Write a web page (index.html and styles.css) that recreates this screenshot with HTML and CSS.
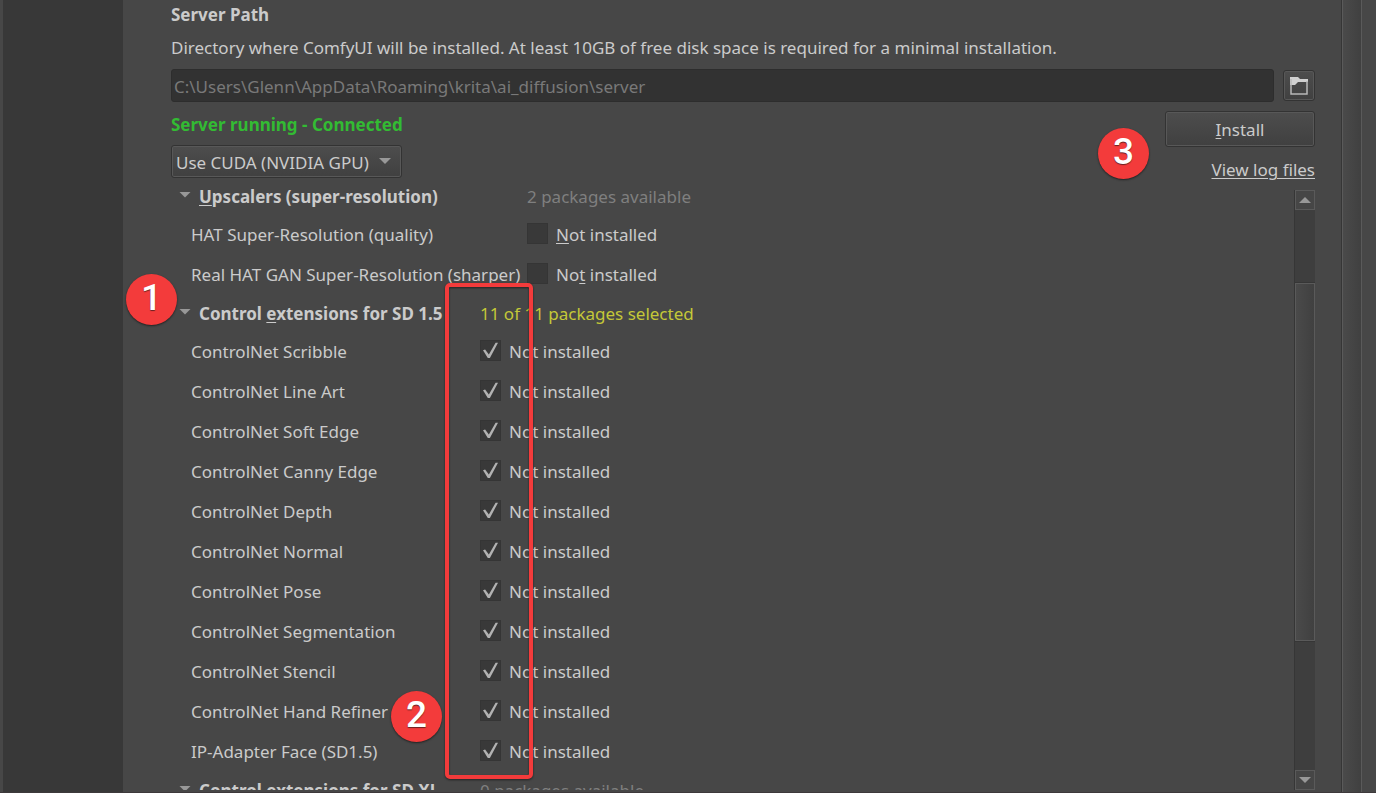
FILE: index.html
```html
<!DOCTYPE html>
<html lang="en">
<head>
<meta charset="utf-8">
<title>Server configuration</title>
<link rel="stylesheet" href="styles.css">
</head>
<body>
<div class="window">
  <aside class="sidebar"></aside>
  <main class="panel">
    <h2 class="title">Server Path</h2>
    <label class="description" for="path">Directory where ComfyUI will be installed. At least 10GB of free disk space is required for a minimal installation.</label>
    <div class="path-row">
      <input class="path" id="path" type="text" value="C:\Users\Glenn\AppData\Roaming\krita\ai_diffusion\server" disabled>
      <button class="button browse" type="button" aria-label="Choose folder">
        <svg width="20" height="20" viewBox="0 0 20 20"><path d="M1 1H9L11 3H19V6H9L6 9H1Z" fill="#d0d0d0"/><path d="M2 3V18H18V5" fill="none" stroke="#b8b8b8" stroke-width="1.5"/></svg>
      </button>
    </div>
    <div class="body">
      <div class="left">
        <p class="status">Server running - Connected</p>
        <div class="combo">
          <select class="select" aria-label="Backend"><option>Use CUDA (NVIDIA GPU)</option></select>
          <i class="arrow combo-arrow"></i>
        </div>
        <div class="packages">
          <section class="group wide">
            <h3 class="head"><i class="arrow"></i><span class="name"><u>U</u>pscalers (super-resolution)</span><span class="count">2 packages available</span></h3>
            <div class="row"><span class="name">HAT Super-Resolution (quality)</span><label class="check"><input type="checkbox"><span><u>N</u>ot installed</span></label></div>
            <div class="row"><span class="name">Real HAT GAN Super-Resolution (sharper)</span><label class="check"><input type="checkbox"><span>No<u>t</u> installed</span></label></div>
          </section>
          <section class="group">
            <h3 class="head"><i class="arrow"></i><span class="name">Control <u>e</u>xtensions for SD 1.5</span><span class="count selected">11 of 11 packages selected</span></h3>
            <div class="row"><span class="name">ControlNet Scribble</span><label class="check"><input type="checkbox" checked><span>Not installed</span></label></div>
            <div class="row"><span class="name">ControlNet Line Art</span><label class="check"><input type="checkbox" checked><span>Not installed</span></label></div>
            <div class="row"><span class="name">ControlNet Soft Edge</span><label class="check"><input type="checkbox" checked><span>Not installed</span></label></div>
            <div class="row"><span class="name">ControlNet Canny Edge</span><label class="check"><input type="checkbox" checked><span>Not installed</span></label></div>
            <div class="row"><span class="name">ControlNet Depth</span><label class="check"><input type="checkbox" checked><span>Not installed</span></label></div>
            <div class="row"><span class="name">ControlNet Normal</span><label class="check"><input type="checkbox" checked><span>Not installed</span></label></div>
            <div class="row"><span class="name">ControlNet Pose</span><label class="check"><input type="checkbox" checked><span>Not installed</span></label></div>
            <div class="row"><span class="name">ControlNet Segmentation</span><label class="check"><input type="checkbox" checked><span>Not installed</span></label></div>
            <div class="row"><span class="name">ControlNet Stencil</span><label class="check"><input type="checkbox" checked><span>Not installed</span></label></div>
            <div class="row"><span class="name">ControlNet Hand Refiner</span><label class="check"><input type="checkbox" checked><span>Not installed</span></label></div>
            <div class="row"><span class="name">IP-Adapter Face (SD1.5)</span><label class="check"><input type="checkbox" checked><span>Not installed</span></label></div>
          </section>
          <section class="group">
            <h3 class="head"><i class="arrow"></i><span class="name">Control extensions for SD XL</span><span class="count">0 packages available</span></h3>
          </section>
          <div class="highlight"></div>
        </div>
      </div>
      <div class="right">
        <button class="button install" type="button"><span><u>I</u>nstall</span></button>
        <a class="log" href="#">View log files</a>
        <div class="scrollbar">
          <button class="step" type="button" aria-label="Scroll up"><i class="arrow up"></i></button>
          <div class="track"><div class="thumb"></div></div>
          <button class="step" type="button" aria-label="Scroll down"><i class="arrow"></i></button>
        </div>
      </div>
    </div>
  </main>
  <div class="gutter"></div>
  <div class="edge"></div>
  <span class="badge one">1</span>
  <span class="badge two">2</span>
  <span class="badge three">3</span>
</div>
</body>
</html>
```
FILE: styles.css
```css
* { box-sizing: border-box; }
body {
  margin: 0;
  background: #474747;
  color: #cbcbcb;
  font: 17px/24px "Noto Sans", "Open Sans", sans-serif;
}
u { text-decoration-thickness: 1px; text-underline-offset: 2px; }
.window {
  position: relative;
  display: flex;
  height: 100vh;
  overflow: hidden;
  padding-left: 3px;
  border-bottom: 1px solid #3d393b;
}
.sidebar { flex: 0 0 120px; background: #383838; }
.panel {
  flex: 1;
  min-width: 0;
  display: flex;
  flex-direction: column;
  padding: 3px 27px 2px 48px;
}
.title { margin: 0 0 9px; font-size: 17px; line-height: 24px; font-weight: 700; }
.description { margin-bottom: 9px; white-space: nowrap; }
.path-row { display: flex; align-items: center; gap: 9px; margin-bottom: 9px; }
.path {
  flex: 1;
  min-width: 0;
  height: 33px;
  padding: 1px 2px 0;
  border: 1px solid #2d2d2d;
  border-radius: 3px;
  background: #323232;
  color: #797979;
  font: inherit;
}
.button {
  border: 1px solid #333;
  border-radius: 3px;
  background: linear-gradient(#4d4d4d, #404040);
  box-shadow: inset 0 0 0 1px #585858;
  color: inherit;
  font: inherit;
  padding: 0;
}
.browse { display: grid; place-items: center; width: 32px; height: 31px; }
.body { flex: 1; min-height: 0; display: flex; justify-content: space-between; }
.left { flex: 1; min-width: 0; display: flex; flex-direction: column; }
.status { margin: 2px 0 8px; color: #33bb33; font-weight: 700; }
.combo { position: relative; align-self: flex-start; width: 231px; }
.select {
  display: block;
  appearance: none;
  width: 100%;
  height: 33px;
  padding: 2px 4px 0;
  border: 1px solid #333;
  border-radius: 3px;
  background: linear-gradient(#4d4d4d, #404040);
  box-shadow: inset 0 0 0 1px #585858;
  color: inherit;
  font: inherit;
}
.arrow {
  width: 12px;
  height: 6px;
  background: #989898;
  clip-path: polygon(0 0, 100% 0, 50% 100%);
}
.up { transform: rotate(180deg); }
.combo-arrow { position: absolute; right: 11px; top: 13px; }
.packages { position: relative; flex: 1; min-height: 0; overflow: hidden; }
.group { --column: 289px; }
.wide { --column: 336px; }
.head, .row {
  display: grid;
  grid-template-columns: var(--column) 1fr;
  align-items: center;
  height: 40px;
  padding-left: 20px;
  white-space: nowrap;
}
.head {
  grid-template-columns: 20px calc(var(--column) - 8px) 1fr;
  height: 37px;
  padding-left: 8px;
  margin: 0;
  font-size: 17px;
}
.head .arrow { margin-bottom: 4px; }
.count { color: #7f7f7f; font-weight: 400; }
.selected { color: #c4c838; }
.check { display: flex; align-items: center; gap: 8px; }
.check input {
  appearance: none;
  width: 21px;
  height: 21px;
  margin: 0 0 3px;
  border: 1px solid #353535;
  background: #393939;
}
.check input:checked::before {
  content: "";
  display: block;
  width: 15px;
  height: 16px;
  margin: 1px 2px;
  background: #b2b2b2;
  clip-path: polygon(0 52%, 14% 47%, 39% 78%, 84% 4%, 100% 4%, 46% 100%, 32% 100%);
}
.highlight {
  position: absolute;
  left: 274px;
  top: 105px;
  width: 88px;
  height: 496px;
  border: 4px solid #f33b3b;
  border-radius: 5px;
  filter: drop-shadow(0 1px 1px #222);
}
.right { width: 150px; display: flex; flex-direction: column; align-items: flex-end; }
.install { width: 150px; height: 36px; padding-top: 2px; margin-bottom: 11px; }
.log { color: inherit; text-decoration-thickness: 1px; text-underline-offset: 2px; margin-bottom: 8px; white-space: nowrap; }
.scrollbar {
  flex: 1;
  min-height: 0;
  display: flex;
  flex-direction: column;
  width: 21px;
  border-left: 1px solid #363636;
  background: #3e3e3e;
}
.step {
  display: grid;
  place-items: center;
  width: 20px;
  height: 20px;
  padding: 0;
  border: 1px solid #5a5a5a;
  background: #464646;
}
.track { flex: 1; display: grid; grid-template-rows: 73fr 358fr 129fr; }
.thumb { grid-row: 2; border: 1px solid #5a5a5a; background: linear-gradient(90deg, #4a4a4a, #404040); box-shadow: 0 -1px #363636, 0 1px #363636; }
.gutter {
  flex: 0 0 20px;
  border: 1px solid #5a5a5a;
  border-width: 0 1px;
  box-shadow: -1px 0 #363636;
  background: linear-gradient(90deg, #4a4a4a, #404040);
}
.edge { flex: 0 0 14px; }
.badge {
  position: absolute;
  width: 51px;
  height: 51px;
  padding-bottom: 4px;
  display: grid;
  place-items: center;
  border-radius: 50%;
  background: #f33b3b;
  box-shadow: 0 1px 2px #222;
  color: #fff;
  font: 500 37px/40px Roboto, sans-serif;
  text-shadow: 0 1px 1px #622;
}
.one { left: 126px; top: 274px; }
.two { left: 391px; top: 691px; }
.three { right: 227px; top: 128px; }
```
